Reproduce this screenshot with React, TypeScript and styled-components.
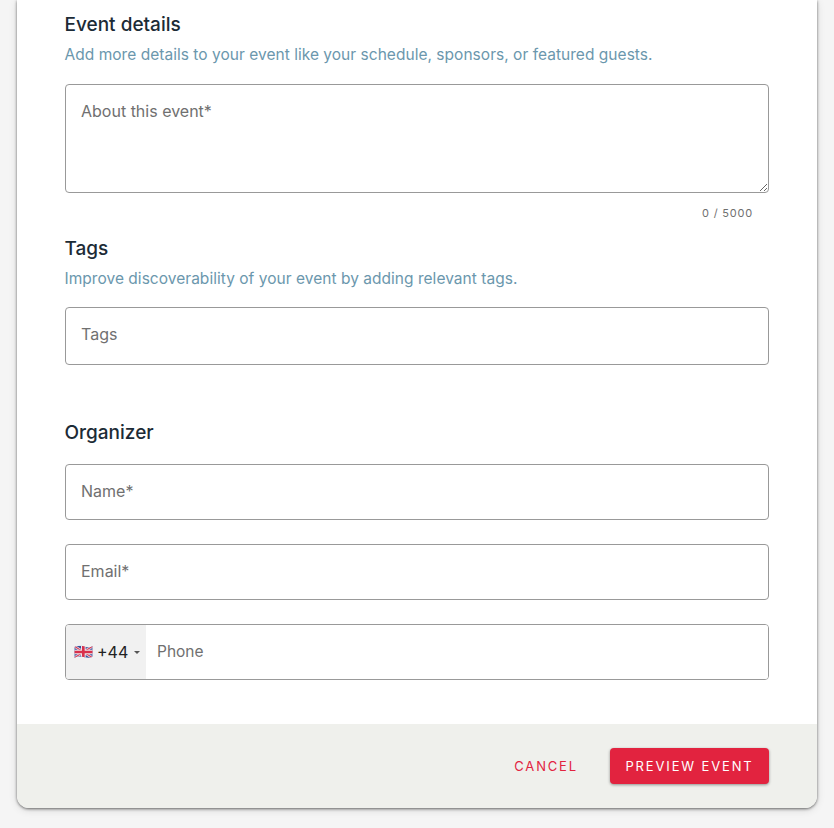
import styled, { createGlobalStyle } from 'styled-components';

const GlobalStyle = createGlobalStyle`
    html, body {
        margin: 0;
        padding: 0;
        background-color: #f5f5f5;
        font-family: Inter, "Liberation Sans", sans-serif;
    }
`;

const UkFlag = () => (
    <svg width="19" height="14" viewBox="0 0 57 42" aria-hidden="true">
        <defs>
            <clipPath id="flag-wave">
                <path d="M1 6 C14 0 26 3 35 6 C43 8 50 7 56 4 L56 35 C48 39 42 39 33 37 C22 34 12 33 1 38 Z" />
            </clipPath>
        </defs>
        <g clipPath="url(#flag-wave)">
            <rect width="57" height="42" fill="#3b4f9c" />
            <path d="M0 3 L57 39 M57 3 L0 39" stroke="#e9e4ea" strokeWidth="8" />
            <path d="M0 3 L57 39 M57 3 L0 39" stroke="#d9405a" strokeWidth="3.5" />
            <path d="M28 0 V42 M0 21 H57" stroke="#ece7ea" strokeWidth="14" />
            <path d="M28 0 V42 M0 21 H57" stroke="#d9304c" strokeWidth="8" />
        </g>
    </svg>
);

const App: React.FC = () => {
    return (
        <>
            <GlobalStyle />
            <StyledPage>
                <StyledCard>
                    <StyledBody>
                        <StyledHeading>Event details</StyledHeading>
                        <StyledHint>Add more details to your event like your schedule, sponsors, or featured guests.</StyledHint>
                        <StyledTextareaBlock>
                            <StyledTextarea placeholder="About this event*" />
                        </StyledTextareaBlock>
                        <StyledCounter>0 / 5000</StyledCounter>

                        <StyledTagsHeading>Tags</StyledTagsHeading>
                        <StyledHint>Improve discoverability of your event by adding relevant tags.</StyledHint>
                        <StyledTagsInput placeholder="Tags" />

                        <StyledOrganizerHeading>Organizer</StyledOrganizerHeading>
                        <StyledFields>
                            <StyledInput placeholder="Name*" />
                            <StyledInput placeholder="Email*" />
                            <StyledPhoneBlock>
                                <StyledCountryButton>
                                    <UkFlag />
                                    <StyledDialCode>+44</StyledDialCode>
                                    <StyledCaret />
                                </StyledCountryButton>
                                <StyledPhoneInput placeholder="Phone" />
                            </StyledPhoneBlock>
                        </StyledFields>
                    </StyledBody>
                    <StyledFooter>
                        <StyledCancelButton>CANCEL</StyledCancelButton>
                        <StyledPreviewButton>PREVIEW EVENT</StyledPreviewButton>
                    </StyledFooter>
                </StyledCard>
            </StyledPage>
        </>
    );
};

const StyledPage = styled.div`
    width: 834px;
    height: 828px;
    padding: 0 17px 20px;
    box-sizing: border-box;
    overflow: hidden;
`;

const StyledCard = styled.div`
    width: 800px;
    height: 808px;
    display: flex;
    flex-direction: column;
    background-color: #fff;
    border-radius: 0 0 12px 12px;
    box-shadow: 0 1px 3px rgba(0, 0, 0, 0.55), 0 2px 8px rgba(0, 0, 0, 0.12);
    overflow: hidden;
`;

const StyledBody = styled.div`
    flex: 1;
    padding: 13px 48px 0 47.5px;
    display: flex;
    flex-direction: column;
`;

const StyledHeading = styled.div`
    font-size: 19px;
    line-height: 24px;
    font-weight: 500;
    color: #1c2b36;
`;

const StyledTagsHeading = styled(StyledHeading)`
    margin-top: 16px;
`;

const StyledOrganizerHeading = styled(StyledHeading)`
    margin-top: 56px;
`;

const StyledHint = styled.div`
    margin-top: 6px;
    font-size: 15.5px;
    line-height: 24px;
    letter-spacing: 0.03px;
    color: #6b97ad;
`;

const StyledTextareaBlock = styled.div`
    margin-top: 17px;
    margin-left: 0.5px;
    height: 109px;
`;

const StyledTextarea = styled.textarea`
    display: block;
    width: 100%;
    height: 100%;
    box-sizing: border-box;
    padding: 16px 15px;
    border: 1px solid #999;
    border-radius: 4px;
    outline: none;
    background: #fff;
    font-family: inherit;
    font-size: 16px;
    line-height: 20px;
    color: #333;
    &::placeholder {
        color: #707070;
        opacity: 1;
    }
`;

const StyledCounter = styled.div`
    margin-top: 12px;
    padding-right: 16px;
    text-align: right;
    font-size: 11px;
    line-height: 16px;
    letter-spacing: 0.8px;
    color: #6f6f6f;
`;

const StyledInput = styled.input`
    display: block;
    width: 100%;
    height: 56px;
    box-sizing: border-box;
    padding: 0 15px 2px;
    border: 1px solid #999;
    border-radius: 4px;
    outline: none;
    background: #fff;
    font-family: inherit;
    font-size: 16px;
    color: #333;
    &::placeholder {
        color: #707070;
        opacity: 1;
    }
`;

const StyledTagsInput = styled(StyledInput)`
    margin-top: 16px;
    margin-left: 0.5px;
    width: calc(100% - 0.5px);
    height: 58px;
    padding-bottom: 5px;
`;

const StyledFields = styled.div`
    margin-top: 19px;
    margin-left: 0.5px;
    display: flex;
    flex-direction: column;
    gap: 24px;
`;

const StyledPhoneBlock = styled.div`
    height: 56px;
    display: flex;
    box-sizing: border-box;
    border: 1px solid #999;
    border-radius: 4px;
    overflow: hidden;
`;

const StyledCountryButton = styled.div`
    width: 80px;
    display: flex;
    align-items: center;
    padding-left: 8px;
    box-sizing: border-box;
    background-color: #f1f1f1;
`;

const StyledDialCode = styled.span`
    margin-left: 4px;
    font-size: 16px;
    color: #222;
`;

const StyledCaret = styled.span`
    margin-left: 6px;
    width: 0;
    height: 0;
    border-left: 3px solid transparent;
    border-right: 3px solid transparent;
    border-top: 3px solid #555;
`;

const StyledPhoneInput = styled.input`
    flex: 1;
    min-width: 0;
    padding: 0 11px 2px;
    border: none;
    outline: none;
    background: #fff;
    font-family: inherit;
    font-size: 15.5px;
    &::placeholder {
        color: #707070;
        opacity: 1;
    }
`;

const StyledFooter = styled.div`
    height: 84px;
    display: flex;
    align-items: center;
    justify-content: flex-end;
    gap: 32px;
    padding-right: 48px;
    background-color: #eff0ec;
`;

const StyledCancelButton = styled.div`
    font-size: 13px;
    font-weight: 400;
    letter-spacing: 1.85px;
    color: #e2233f;
`;

const StyledPreviewButton = styled.div`
    width: 159px;
    height: 36px;
    display: flex;
    align-items: center;
    justify-content: center;
    border-radius: 4px;
    background-color: #e2233f;
    box-shadow: 0 1px 3px rgba(0, 0, 0, 0.4);
    font-size: 13px;
    font-weight: 400;
    letter-spacing: 1.85px;
    color: #fff;
`;

export default App;
